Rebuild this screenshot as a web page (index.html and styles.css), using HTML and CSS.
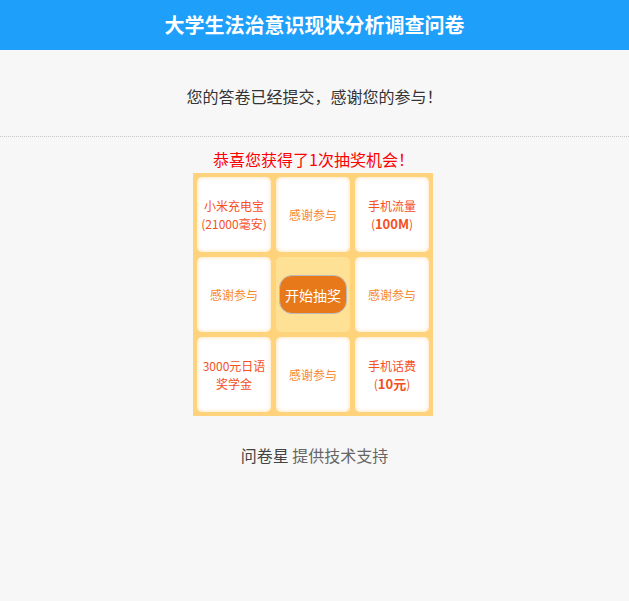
FILE: index.html
```html
<!DOCTYPE html>
<html lang="zh-CN">
<head>
  <meta charset="UTF-8">
  <title>大学生法治意识现状分析调查问卷</title>
  <link rel="stylesheet" href="styles.css">
</head>
<body>
  <div class="header">大学生法治意识现状分析调查问卷</div>
  <div class="thanks">您的答卷已经提交，感谢您的参与！</div>
  <div class="lottery">
    <div class="lottery-tip">恭喜您获得了1次抽奖机会！</div>
    <div class="board">
      <div class="cell prize"><span>小米充电宝<br>(21000毫安)</span></div>
      <div class="cell"><span>感谢参与</span></div>
      <div class="cell prize"><span>手机流量<br>(<b>100M</b>)</span></div>
      <div class="cell"><span>感谢参与</span></div>
      <div class="cell center"><button class="start">开始抽奖</button></div>
      <div class="cell"><span>感谢参与</span></div>
      <div class="cell prize"><span>3000元日语<br>奖学金</span></div>
      <div class="cell"><span>感谢参与</span></div>
      <div class="cell prize"><span>手机话费<br>(<b>10元</b>)</span></div>
    </div>
  </div>
  <div class="footer"><span class="brand">问卷星</span> 提供技术支持</div>
</body>
</html>
```
FILE: styles.css
```css
* {
  margin: 0;
  padding: 0;
  box-sizing: border-box;
}

body {
  background: #f7f7f7;
  font-family: "Microsoft YaHei", "Noto Sans CJK SC", sans-serif;
  color: #333;
  min-height: 100vh;
}

.header {
  height: 50px;
  line-height: 50px;
  background: #1ea0fa;
  color: #fff;
  font-size: 20px;
  font-weight: bold;
  text-align: center;
}

.thanks {
  height: 87px;
  padding-top: 35px;
  font-size: 16px;
  line-height: 22px;
  text-align: center;
  color: #333;
  border-bottom: 1px dotted #c8c8c8;
}

.lottery {
  padding-top: 11px;
  display: flex;
  flex-direction: column;
  align-items: center;
}

.lottery-tip {
  color: #f00;
  font-size: 16px;
  line-height: 22px;
  margin-bottom: 3px;
  margin-right: 2px;
}

.board {
  width: 240px;
  padding: 4px;
  margin-right: 3px;
  background: #ffd27c;
  display: grid;
  grid-template-columns: repeat(3, 74px);
  grid-auto-rows: 75px;
  gap: 5px;
}

.cell {
  background: #fff;
  border-radius: 5px;
  box-shadow: inset 0 0 4px rgba(255, 200, 110, 0.6);
  display: flex;
  align-items: center;
  justify-content: center;
  text-align: center;
  font-size: 12px;
  line-height: 18px;
  color: #f5892e;
}

.cell.prize {
  color: #f5501e;
}

.cell b {
  font-weight: bold;
  font-size: 13px;
}

.cell.center {
  background: #ffe196;
  box-shadow: none;
}

.start {
  width: 68px;
  height: 39px;
  border: 1px solid #bbb;
  border-radius: 13px;
  background: #e8791a;
  color: #fff;
  font-family: inherit;
  font-size: 14px;
  cursor: pointer;
}

.footer {
  margin-top: 28px;
  text-align: center;
  font-size: 16px;
  line-height: 22px;
  color: #666;
}

.brand {
  color: #444;
}
```
